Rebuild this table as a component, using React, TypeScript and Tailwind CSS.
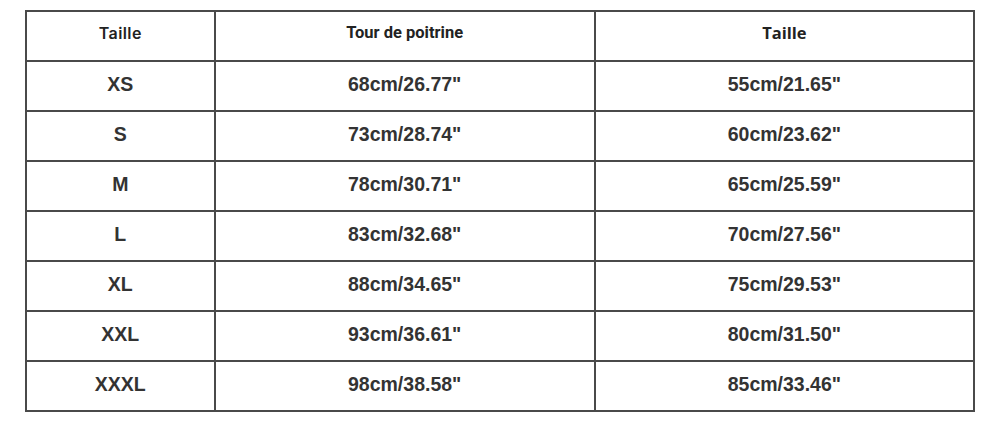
const rows = [
  ["XS", '68cm/26.77"', '55cm/21.65"'],
  ["S", '73cm/28.74"', '60cm/23.62"'],
  ["M", '78cm/30.71"', '65cm/25.59"'],
  ["L", '83cm/32.68"', '70cm/27.56"'],
  ["XL", '88cm/34.65"', '75cm/29.53"'],
  ["XXL", '93cm/36.61"', '80cm/31.50"'],
  ["XXXL", '98cm/38.58"', '85cm/33.46"'],
];

export default function App() {
  return (
    <div className="w-[1000px] h-[421px] bg-white pt-[10px] pl-[25px]">
      <table className="border-collapse w-[950px] text-[#333] font-['Liberation_Sans',Arial,sans-serif]">
        <colgroup>
          <col className="w-[189px]" />
          <col className="w-[381px]" />
          <col className="w-[380px]" />
        </colgroup>
        <thead>
          <tr className="h-[50px]">
            <th className="border-2 border-[#4a4a4a] pb-[6px] text-[16px] font-semibold tracking-wide font-['Inter',sans-serif] text-[#222]">
              Taille
            </th>
            <th className="border-2 border-[#4a4a4a] pb-[6px] text-[16.5px] font-bold font-['Roboto',sans-serif] text-[#222]">
              Tour de poitrine
            </th>
            <th className="border-2 border-[#4a4a4a] pb-[6px] text-[16.5px] font-bold font-['Open_Sans',sans-serif] text-[#222]">
              Taille
            </th>
          </tr>
        </thead>
        <tbody>
          {rows.map((r) => (
            <tr key={r[0]} className="h-[50px]">
              {r.map((c, i) => (
                <td
                  key={i}
                  className="border-2 border-[#4a4a4a] pb-[2px] text-center text-[19.5px] font-bold"
                >
                  {c}
                </td>
              ))}
            </tr>
          ))}
        </tbody>
      </table>
    </div>
  );
}
